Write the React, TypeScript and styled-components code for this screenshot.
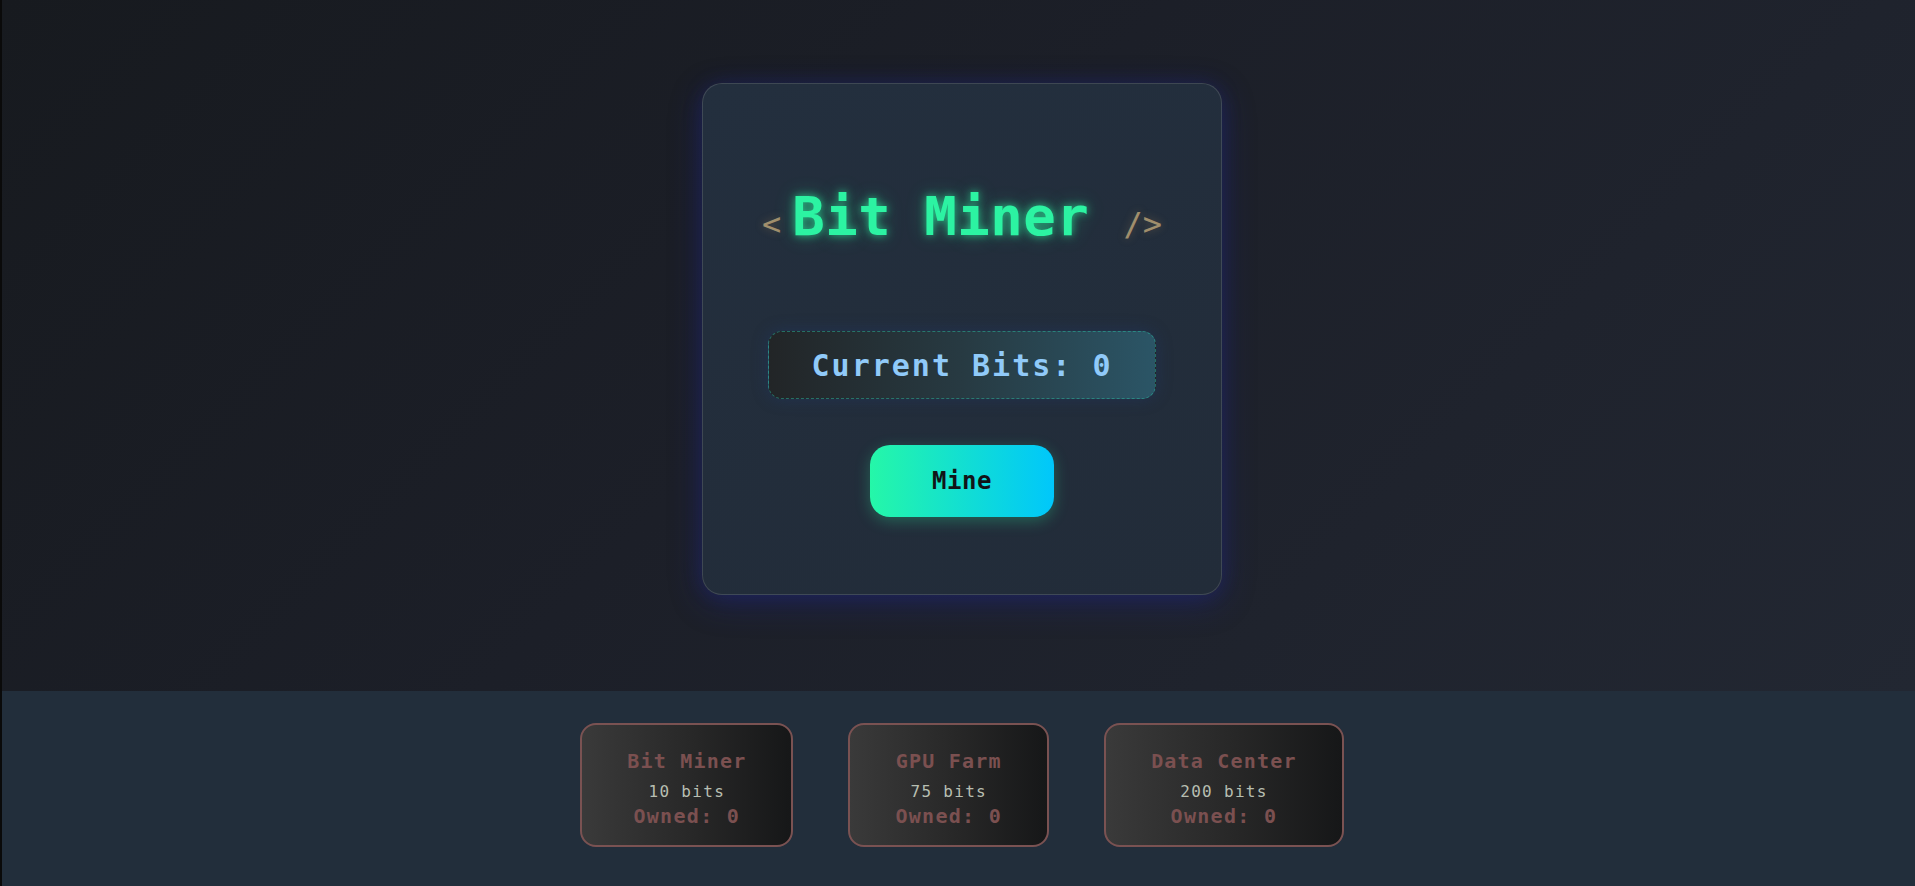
import React from "react";
import styled, { createGlobalStyle } from "styled-components";

const GlobalStyle = createGlobalStyle`
  html, body {
    margin: 0;
    padding: 0;
    background: #0a0a0a;
  }
  * { box-sizing: border-box; }
  #root { min-height: 100vh; }
`;

const mono = `"DejaVu Sans Mono", "Liberation Mono", monospace`;

const Shell = styled.div`
  display: flex;
  min-height: 100vh;
  height: 886px;
`;

const Strip = styled.div`
  width: 2px;
  flex: none;
  background: #0a0a0a;
`;

const Main = styled.div`
  flex: 1;
  display: flex;
  flex-direction: column;
  font-family: ${mono};
`;

const Stage = styled.section`
  flex: 1;
  display: flex;
  justify-content: center;
  align-items: flex-start;
  padding: 83px 0 0 7px;
  background: linear-gradient(135deg, #171a1f 0%, #1c1f28 45%, #222732 100%);
`;

const GameCard = styled.div`
  width: 520px;
  height: 512px;
  display: flex;
  flex-direction: column;
  align-items: center;
  padding-top: 100px;
  border-radius: 20px;
  border: 1px solid rgba(255, 255, 255, 0.13);
  background: linear-gradient(160deg, #232f3e 0%, #222c39 100%);
  box-shadow: 0 8px 32px 0 rgba(31, 38, 135, 0.45), 0 0 18px rgba(31, 38, 135, 0.25);
`;

const Title = styled.h1`
  margin: 0;
  font-family: ${mono};
  font-size: 54px;
  line-height: 65px;
  font-weight: bold;
  letter-spacing: 0.5px;
  color: #2cf3a2;
  text-shadow: 0 0 9px rgba(42, 245, 160, 0.7), 0 0 20px rgba(42, 245, 160, 0.3);
  white-space: pre;
`;

const Bracket = styled.span<{ $side: "open" | "close" }>`
  font-size: 32px;
  font-weight: normal;
  letter-spacing: 0;
  color: #a08e6c;
  text-shadow: 0 0 8px rgba(190, 150, 90, 0.35);
  margin-right: ${(p) => (p.$side === "open" ? "11px" : "0")};
  margin-left: ${(p) => (p.$side === "close" ? "15px" : "0")};
`;

const BitsBox = styled.div`
  margin-top: 74px;
  width: 388px;
  height: 68px;
  display: flex;
  align-items: center;
  justify-content: center;
  border-radius: 14px;
  border: 1px dashed rgba(42, 200, 170, 0.45);
  background: linear-gradient(90deg, #222527 0%, #273a42 50%, #2b5566 100%);
  box-shadow: 0 0 16px rgba(31, 60, 120, 0.35);
  font-size: 30px;
  font-weight: bold;
  letter-spacing: 2px;
  color: #90caf9;
`;

const MineButton = styled.button`
  margin-top: 46px;
  width: 184px;
  height: 72px;
  border: none;
  border-radius: 20px;
  background: linear-gradient(90deg, #25f7a8 0%, #00c7fb 100%);
  box-shadow: 0 4px 15px rgba(42, 245, 160, 0.28);
  font-family: ${mono};
  font-size: 24px;
  font-weight: bold;
  letter-spacing: 0.5px;
  color: #111418;
  cursor: pointer;
`;

const Shop = styled.section`
  height: 195px;
  flex: none;
  display: flex;
  justify-content: center;
  align-items: flex-start;
  gap: 55px;
  padding: 32px 0 0 7px;
  background: #222e3b;
`;

const ShopCard = styled.div`
  height: 124px;
  display: flex;
  flex-direction: column;
  align-items: center;
  padding: 24px 45px 0;
  border: 2px solid #7a5252;
  border-radius: 16px;
  background: linear-gradient(90deg, #3a3a3a 0%, #272727 55%, #161718 100%);
`;

const ItemName = styled.div`
  font-size: 20px;
  line-height: 24px;
  font-weight: bold;
  letter-spacing: 1.2px;
  color: #7b5050;
  white-space: nowrap;
`;

const ItemCost = styled.div`
  margin-top: 9px;
  font-size: 16px;
  line-height: 20px;
  letter-spacing: 1.3px;
  color: #b7beb1;
  white-space: nowrap;
`;

const ItemOwned = styled.div`
  margin-top: 2px;
  font-size: 20px;
  line-height: 25px;
  font-weight: bold;
  letter-spacing: 1.3px;
  color: #7b5050;
  white-space: nowrap;
`;

const items = [
  { name: "Bit Miner", cost: 10, owned: 0 },
  { name: "GPU Farm", cost: 75, owned: 0 },
  { name: "Data Center", cost: 200, owned: 0 },
];

export default function App() {
  const [bits, setBits] = React.useState(0);
  return (
    <>
      <GlobalStyle />
      <Shell>
        <Strip />
        <Main>
          <Stage>
            <GameCard>
              <Title>
                <Bracket $side="open">{"<"}</Bracket>
                Bit Miner
                <Bracket $side="close">{" />"}</Bracket>
              </Title>
              <BitsBox>Current Bits: {bits}</BitsBox>
              <MineButton onClick={() => setBits((b) => b)}>Mine</MineButton>
            </GameCard>
          </Stage>
          <Shop>
            {items.map((it) => (
              <ShopCard key={it.name}>
                <ItemName>{it.name}</ItemName>
                <ItemCost>{it.cost} bits</ItemCost>
                <ItemOwned>Owned: {it.owned}</ItemOwned>
              </ShopCard>
            ))}
          </Shop>
        </Main>
      </Shell>
    </>
  );
}
